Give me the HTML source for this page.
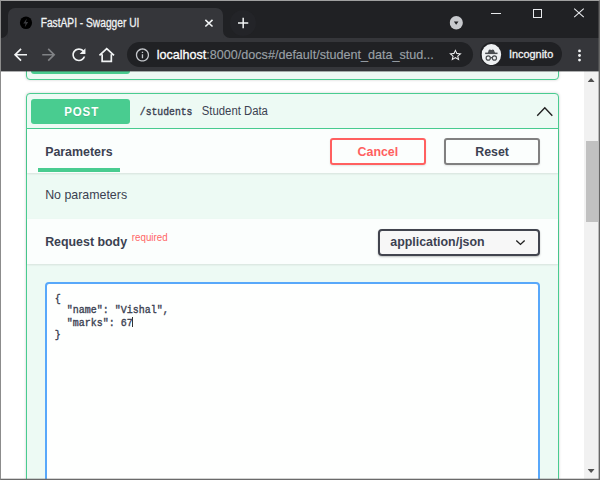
<!DOCTYPE html>
<html><head><meta charset="utf-8">
<style>
*{box-sizing:border-box;margin:0;padding:0}
html,body{width:600px;height:480px;overflow:hidden;background:#fff;font-family:"Liberation Sans",sans-serif}
#wrap{position:relative;width:600px;height:480px;overflow:hidden}
.lay{position:absolute;left:0;top:0;width:600px;height:480px;overflow:hidden}
.sc{position:absolute;left:0;top:0;width:677.97px;height:480px;transform-origin:0 0;transform:scaleX(0.885);overflow:hidden}
.a{position:absolute}
.t{position:absolute;white-space:nowrap;line-height:1;transform-origin:0 0}
#frame{position:absolute;left:0;top:0;width:600px;height:480px;border-top:1px solid #a0a0a0;border-left:1px solid #8c8c8c;border-right:1px solid #666;border-bottom:1px solid #6a6a6a}
</style></head><body>
<div id="wrap">
<div class="lay">
<div class="a " style="left:0px;top:71px;width:600px;height:409px;background:#fff"></div>
<div class="a " style="left:26px;top:50px;width:533px;height:30px;border:1px solid #49cc90;border-radius:4px;background:#edfaf4;box-shadow:0 0 3px rgba(0,0,0,.19)"></div>
<div class="a " style="left:31px;top:50px;width:99px;height:24px;background:#49cc90;border-radius:3px"></div>
<div class="a " style="left:26px;top:93px;width:533px;height:427px;border:1px solid #49cc90;border-radius:4px;background:#edfaf4;box-shadow:0 0 3px rgba(0,0,0,.19)"></div>
<div class="a " style="left:27px;top:128px;width:531px;height:1px;background:#49cc90"></div>
<div class="a " style="left:31px;top:99px;width:99px;height:25px;background:#49cc90;border-radius:3px"></div>
<div class="a " style="left:27px;top:129px;width:531px;height:44px;background:#fbfefd;box-shadow:0 1px 2px rgba(0,0,0,.1)"></div>
<div class="a " style="left:38px;top:168px;width:82px;height:4px;background:#49cc90"></div>
<div class="a " style="left:330px;top:138px;width:96px;height:27px;border:2px solid #ff6060;border-radius:3px;box-shadow:0 1px 2px rgba(0,0,0,.1)"></div>
<div class="a " style="left:444px;top:138px;width:96px;height:27px;border:2px solid #808080;border-radius:3px;box-shadow:0 1px 2px rgba(0,0,0,.1)"></div>
<div class="a " style="left:27px;top:219px;width:531px;height:45px;background:#fbfefd;box-shadow:0 1px 2px rgba(0,0,0,.1)"></div>
<div class="a " style="left:378px;top:229px;width:162px;height:27px;border:2px solid #41444e;border-radius:4px;background:#f7f7f7;box-shadow:0 1px 2px rgba(0,0,0,.25)"></div>
<div class="a " style="left:45px;top:282px;width:495px;height:238px;border:2px solid #58a8fa;border-radius:4px;background:#fefffe"></div>
<div class="a " style="left:132px;top:317px;width:1px;height:10px;background:#333"></div>
<div class="a " style="left:584px;top:71px;width:16px;height:409px;background:#f1f1f1"></div>
<div class="a " style="left:586px;top:141px;width:12px;height:81px;background:#c1c1c1"></div>
</div>
<div class="sc">
<div class="t" style="left:72.54px;top:104.8px;font-size:13px;color:#fff;font-weight:bold;letter-spacing:1px;text-shadow:0 1px 0 rgba(0,0,0,.1)">POST</div>
<div class="t" style="left:157.63px;top:106.38px;font-size:11.5px;transform:scaleX(0.957);font-family:'Liberation Mono',monospace;-webkit-text-stroke:0.4px #3b4151;color:#3b4151">/students</div>
<div class="t" style="left:228.25px;top:105.04px;font-size:12px;transform:scaleX(1.067);color:#3b4151">Student Data</div>
<svg class="a" style="left:605.65px;top:106px" width="19.21" height="11" viewBox="0 0 17 11" preserveAspectRatio="none"><path d="M0.9 9.7 L8.5 1.7 L16 9.7" fill="none" stroke="#222" stroke-width="1.4"/></svg>
<div class="t" style="left:51.41px;top:145.2px;font-size:13px;transform:scaleX(1.077);color:#3b4151;font-weight:bold">Parameters</div>
<div class="t" style="left:403.95px;top:144.8px;font-size:13px;transform:scaleX(1.077);color:#ff6060;font-weight:bold">Cancel</div>
<div class="t" style="left:536.72px;top:144.8px;font-size:13px;transform:scaleX(1.077);color:#3b4151;font-weight:bold">Reset</div>
<div class="t" style="left:51.41px;top:187.7px;font-size:13px;transform:scaleX(1.077);color:#3b4151">No parameters</div>
<div class="t" style="left:51.41px;top:235.2px;font-size:13px;transform:scaleX(1.077);color:#3b4151;font-weight:bold">Request body</div>
<div class="t" style="left:149.15px;top:232.73px;font-size:10px;transform:scaleX(1.1);color:#ff6666">required</div>
<div class="t" style="left:440.68px;top:235px;font-size:13px;transform:scaleX(1.077);color:#3b4151;font-weight:bold">application/json</div>
<svg class="a" style="left:581.92px;top:239px" width="13.56" height="7" viewBox="0 0 12 7" preserveAspectRatio="none"><path d="M1.2 1.4 L5.4 5.4 L9.6 1.4" fill="none" stroke="#222" stroke-width="1.4"/></svg>
<div class="t" style="left:62.15px;top:293.95px;font-size:10.5px;transform:scaleX(1.075);font-family:'Liberation Mono',monospace;-webkit-text-stroke:0.35px #3b4151;color:#3b4151;white-space:pre">{</div>
<div class="t" style="left:62.15px;top:305.35px;font-size:10.5px;transform:scaleX(1.075);font-family:'Liberation Mono',monospace;-webkit-text-stroke:0.35px #3b4151;color:#3b4151;white-space:pre">  &quot;name&quot;: &quot;Vishal&quot;,</div>
<div class="t" style="left:62.15px;top:318.35px;font-size:10.5px;transform:scaleX(1.075);font-family:'Liberation Mono',monospace;-webkit-text-stroke:0.35px #3b4151;color:#3b4151;white-space:pre">  &quot;marks&quot;: 67</div>
<div class="t" style="left:62.15px;top:329.95px;font-size:10.5px;transform:scaleX(1.075);font-family:'Liberation Mono',monospace;-webkit-text-stroke:0.35px #3b4151;color:#3b4151;white-space:pre">}</div>
<svg class="a" style="left:664.41px;top:78px" width="7.91" height="4" viewBox="0 0 7 4" preserveAspectRatio="none"><path d="M0 4 L3.5 0 L7 4 Z" fill="#505050"/></svg>
<svg class="a" style="left:664.41px;top:469px" width="7.91" height="4" viewBox="0 0 7 4" preserveAspectRatio="none"><path d="M0 0 L3.5 4 L7 0 Z" fill="#505050"/></svg>
</div>
<div class="lay" style="height:72px">
<div class="a " style="left:0px;top:0px;width:600px;height:38px;background:#202124"></div>
<div class="a " style="left:8px;top:8px;width:215px;height:30px;background:#35363a;border-radius:7px 7px 0 0"></div>
<div class="a " style="left:0px;top:38px;width:600px;height:33px;background:#35363a"></div>
<div class="a " style="left:0px;top:71px;width:600px;height:1px;background:rgba(53,54,58,.4)"></div>
<div class="a " style="left:127px;top:42px;width:346px;height:25px;background:#202124;border-radius:12.5px"></div>
<div class="a " style="left:480px;top:42px;width:82px;height:24px;background:#202124;border-radius:12px"></div>
<div class="a " style="left:230px;top:10px;width:26px;height:26px;background:#232428;border-radius:50%"></div>
<div class="a " style="left:491px;top:13px;width:10px;height:1px;background:#e8eaed"></div>
<div class="a " style="left:533px;top:9px;width:9px;height:9px;border:1px solid #e8eaed"></div>
</div>
<div class="sc" style="height:72px">
<svg class="a" style="left:1.13px;top:31px" width="7.91" height="7" viewBox="0 0 7 7" preserveAspectRatio="none"><path d="M0 7 H7 V0 A7 7 0 0 1 0 7Z" fill="#35363a"/></svg>
<svg class="a" style="left:251.98px;top:31px" width="7.91" height="7" viewBox="0 0 7 7" preserveAspectRatio="none"><path d="M0 7 H7 A7 7 0 0 1 0 0Z" fill="#35363a"/></svg>
<svg class="a" style="left:22.15px;top:16.1px" width="14.69" height="13.4" viewBox="0 0 13 13.4" preserveAspectRatio="none"><ellipse cx="6.5" cy="6.7" rx="6.1" ry="6.3" fill="#000"/><path d="M7.3 2.4 L3.8 7.4 H6.1 L5.3 11.3 L8.7 6.1 H6.5 Z" fill="#3a3b3f"/></svg>
<div class="t" style="left:45.65px;top:17.04px;font-size:12px;transform:scaleX(0.9604519774011299);color:#f1f3f4;-webkit-text-stroke:0.3px #f1f3f4">FastAPI - Swagger UI</div>
<svg class="a" style="left:231.07px;top:19.2px" width="10.17" height="8.4" viewBox="0 0 9 8.4" preserveAspectRatio="none"><path d="M0.9 0.9 L8.1 7.5 M8.1 0.9 L0.9 7.5" stroke="#f1f3f4" stroke-width="1.6" fill="none"/></svg>
<svg class="a" style="left:267.8px;top:17px" width="13.56" height="12" viewBox="0 0 12 12" preserveAspectRatio="none"><path d="M6 0.8 V11.2 M0.8 6 H11.2" stroke="#f1f3f4" stroke-width="1.5" fill="none"/></svg>
<svg class="a" style="left:508.47px;top:16.3px" width="15.14" height="13.6" viewBox="0 0 13.4 13.6" preserveAspectRatio="none"><ellipse cx="6.7" cy="6.8" rx="6.6" ry="6.7" fill="#c8cace"/><path d="M4.3 5.4 H8.9 L6.6 8.8 Z" fill="#202124"/></svg>
<svg class="a" style="left:647.8px;top:8.4px" width="12.43" height="9.8" viewBox="0 0 11 9.8" preserveAspectRatio="none"><path d="M0.7 0.7 L10.3 9.1 M10.3 0.7 L0.7 9.1" stroke="#e8eaed" stroke-width="1.1" fill="none"/></svg>
<svg class="a" style="left:11.86px;top:45px" width="22.26" height="19.5" viewBox="0 0 24 24" preserveAspectRatio="none"><path d="M20 11H7.83l5.59-5.59L12 4l-8 8 8 8 1.41-1.41L7.83 13H20v-2z" fill="#f1f3f4"/></svg>
<svg class="a" style="left:44.29px;top:45px" width="22.26" height="19.5" viewBox="0 0 24 24" preserveAspectRatio="none"><path d="M12 4l-1.41 1.41L16.17 11H4v2h12.17l-5.58 5.59L12 20l8-8z" fill="#808285"/></svg>
<svg class="a" style="left:77.85px;top:45.1px" width="22.26" height="19.5" viewBox="0 0 24 24" preserveAspectRatio="none"><path d="M17.65 6.35C16.2 4.9 14.21 4 12 4c-4.42 0-7.99 3.58-7.99 8s3.57 8 7.99 8c3.73 0 6.84-2.55 7.73-6h-2.08c-.82 2.33-3.04 4-5.65 4-3.31 0-6-2.69-6-6s2.69-6 6-6c1.66 0 3.14.69 4.22 1.78L13 11h7V4l-2.35 2.35z" fill="#f1f3f4"/></svg>
<svg class="a" style="left:110.73px;top:47px" width="19.21" height="16" viewBox="0 0 17 16" preserveAspectRatio="none"><path d="M1.2 8.4 L8.5 1.6 L15.8 8.4 M3.9 7.2 V14.4 H13.1 V7.2" stroke="#f1f3f4" stroke-width="1.7" fill="none"/></svg>
<svg class="a" style="left:152.2px;top:46.7px" width="17.97" height="15.9" viewBox="0 0 24 24" preserveAspectRatio="none"><path d="M11 7h2v2h-2zm0 4h2v6h-2zm1-9C6.48 2 2 6.48 2 12s4.48 10 10 10 10-4.48 10-10S17.52 2 12 2zm0 18c-4.41 0-8-3.59-8-8s3.59-8 8-8 8 3.59 8 8-3.59 8-8 8z" fill="#c4c7cb"/></svg>
<div class="t" style="left:176.61px;top:48.1px;font-size:13px;transform:scaleX(1.0937853107344633);color:#9aa0a6;-webkit-text-stroke:0.15px"><span style="color:#fff;-webkit-text-stroke:0.3px #fff">localhost</span>:8000/docs#/default/student_data_stud...</div>
<svg class="a" style="left:505.88px;top:47.7px" width="17.18" height="14.2" viewBox="0 0 24 24" preserveAspectRatio="none"><path d="M22 9.24l-7.19-.62L12 2 9.19 8.63 2 9.24l5.46 4.73L5.82 21 12 17.27 18.18 21l-1.63-7.03L22 9.24zM12 15.4l-3.76 2.27 1-4.28-3.32-2.88 4.38-.38L12 6.1l1.71 4.04 4.38.38-3.32 2.88 1 4.28L12 15.4z" fill="#f1f3f4"/></svg>
<svg class="a" style="left:544.18px;top:43.6px" width="22.37" height="21.2" viewBox="0 0 19.8 21.2" preserveAspectRatio="none"><ellipse cx="9.9" cy="10.6" rx="9.8" ry="10.5" fill="#eef0f2"/><path d="M6.4 9 L7.3 5.9 L8.4 5.5 L9.9 6.1 L11.4 5.5 L12.5 5.9 L13.6 9 Z" fill="#4a4d51"/><rect x="3.7" y="8.6" width="12.4" height="1.5" fill="#4a4d51"/><ellipse cx="6.8" cy="14" rx="2.1" ry="2.2" fill="none" stroke="#4a4d51" stroke-width="1.2"/><ellipse cx="13" cy="14" rx="2.1" ry="2.2" fill="none" stroke="#4a4d51" stroke-width="1.2"/><path d="M8.8 13.6 H11" stroke="#4a4d51" stroke-width="1.1"/></svg>
<div class="t" style="left:574.92px;top:48.99px;font-size:11px;transform:scaleX(1.1220338983050848);color:#f1f3f4;-webkit-text-stroke:0.3px #f1f3f4">Incognito</div>
<svg class="a" style="left:651.98px;top:49px" width="5.65" height="13" viewBox="0 0 5 13" preserveAspectRatio="none"><circle cx="2.5" cy="1.9" r="1.4" fill="#f1f3f4"/><circle cx="2.5" cy="6.5" r="1.4" fill="#f1f3f4"/><circle cx="2.5" cy="11.1" r="1.4" fill="#f1f3f4"/></svg>
</div>
<div class="a" style="left:0;top:478px;width:600px;height:1px;background:rgba(110,110,110,.3)"></div><div class="a" style="left:598px;top:0;width:1px;height:480px;background:rgba(110,110,110,.4)"></div>
<div id="frame"></div>
</div>
</body></html>
